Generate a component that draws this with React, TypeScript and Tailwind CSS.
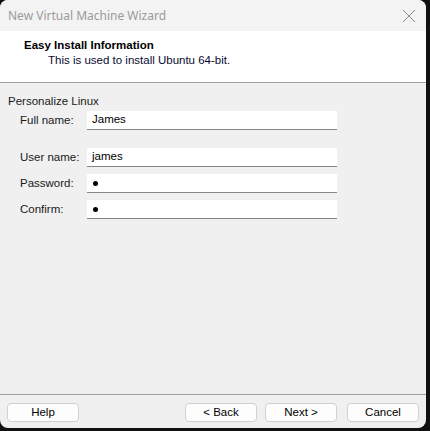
import React from 'react'

const fields = [
  { label: 'User name:', value: 'james' },
  { label: 'Password:', value: '●' },
  { label: 'Confirm:', value: '●' },
]

function Field({ label, value }: { label: string; value: string }) {
  const secret = value === '●'
  return (
    <div className="flex items-center h-[19px]">
      <span className="w-[67px] text-[11.5px] text-[#1a1a1a] whitespace-nowrap">{label}</span>
      <div className="w-[250px] h-[19px] bg-white border-b border-[#868686] flex items-center pl-[5px]">
        {secret ? (
          <span className="block w-[5px] h-[5px] rounded-full bg-black ml-[1px]" />
        ) : (
          <span className="text-[11.5px] text-black leading-none">{value}</span>
        )}
      </div>
    </div>
  )
}

function Btn({ children }: { children: React.ReactNode }) {
  return (
    <button className="block w-[72px] h-[19px] rounded-[4px] bg-[#fdfdfd] border border-[#d0d0d0] text-[11.5px] text-black leading-none">
      {children}
    </button>
  )
}

export default function App() {
  return (
    <div className="w-[430px] h-[431px] bg-[#111] overflow-hidden" style={{ fontFamily: '"Liberation Sans", Arial, sans-serif' }}>
      <div className="w-[426px] h-[428px] bg-[#f0f0f0] rounded-[8px] overflow-hidden flex flex-col">
        {/* title bar */}
        <div className="h-[31px] bg-[#f3f3f3] flex items-center justify-between pl-[8px] pr-[9px]">
          <span className="text-[12px] text-[#9a9a9a]" style={{ fontFamily: '"Noto Sans", sans-serif' }}>
            New Virtual Machine Wizard
          </span>
          <svg width="14" height="14" viewBox="0 0 14 14" className="mr-[1px]">
            <path d="M1 1 L13 13 M13 1 L1 13" stroke="#8a8a8a" strokeWidth="1" fill="none" />
          </svg>
        </div>

        {/* header */}
        <div className="h-[52px] bg-white border-b border-[#a0a0a0] pl-[24px] pt-[7px]">
          <div className="text-[11.5px] font-bold text-black leading-[14px]">Easy Install Information</div>
          <div className="text-[11.5px] text-[#0a0a30] leading-[14px] mt-[1px] pl-[24px]">This is used to install Ubuntu 64-bit.</div>
        </div>

        {/* body */}
        <div className="flex-1 pl-[8px] pt-[11px]">
          <div className="text-[11.5px] text-[#1a1a1a] leading-[14px]">Personalize Linux</div>
          <div className="pl-[12px] mt-[3px] flex flex-col gap-[7px]">
            <Field label="Full name:" value="James" />
            <div className="h-[4px]" />
            {fields.map((f) => (
              <Field key={f.label} label={f.label} value={f.value} />
            ))}
          </div>
        </div>

        {/* footer */}
        <div className="h-[34px] border-t border-[#a0a0a0] flex items-start pt-[8px] pl-[7px] pr-[7px]">
          <Btn>Help</Btn>
          <div className="flex-1" />
          <div className="flex">
            <Btn>&lt; Back</Btn>
            <div className="w-[8px]" />
            <Btn>Next &gt;</Btn>
            <div className="w-[10px]" />
            <Btn>Cancel</Btn>
          </div>
        </div>
      </div>
    </div>
  )
}
